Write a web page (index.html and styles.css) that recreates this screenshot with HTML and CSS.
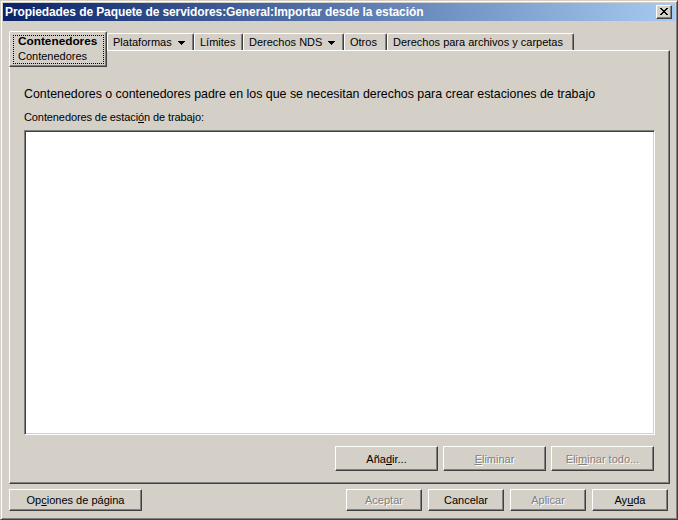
FILE: index.html
```html
<!DOCTYPE html>
<html lang="es">
<head>
<meta charset="utf-8">
<title>Propiedades de Paquete de servidores</title>
<link rel="stylesheet" href="styles.css">
</head>
<body>
<div class="window">
  <div class="titlebar">
    <span class="title">Propiedades de Paquete de servidores:General:Importar desde la estación</span>
    <span class="close-btn">
      <svg width="8" height="7" viewBox="0 0 8 7" shape-rendering="crispEdges">
        <path d="M0 0h2v1h-2zM6 0h2v1h-2zM1 1h2v1h-2zM5 1h2v1h-2zM2 2h4v1h-4zM3 3h2v1h-2zM2 4h4v1h-4zM1 5h2v1h-2zM5 5h2v1h-2zM0 6h2v1h-2zM6 6h2v1h-2z" fill="#000"/>
      </svg>
    </span>
  </div>
  <div class="body">
    <div class="tabs">
      <div class="tab tab-selected">
        <div class="focus-ring">
          <div class="tab-title">Contenedores</div>
          <div class="tab-sub">Contenedores</div>
        </div>
      </div>
      <div class="tab tab-plataformas">Plataformas<svg class="arrow" width="7" height="4" viewBox="0 0 7 4" shape-rendering="crispEdges"><path d="M0 0h7v1h-7zM1 1h5v1h-5zM2 2h3v1h-3zM3 3h1v1h-1z" fill="#000"/></svg></div>
      <div class="tab tab-limites">Límites</div>
      <div class="tab tab-nds">Derechos NDS<svg class="arrow" width="7" height="4" viewBox="0 0 7 4" shape-rendering="crispEdges"><path d="M0 0h7v1h-7zM1 1h5v1h-5zM2 2h3v1h-3zM3 3h1v1h-1z" fill="#000"/></svg></div>
      <div class="tab tab-otros">Otros</div>
      <div class="tab tab-archivos">Derechos para archivos y carpetas</div>
    </div>
    <div class="panel">
      <p class="intro">Contenedores o contenedores padre en los que se necesitan derechos para crear estaciones de trabajo</p>
      <div class="field-label">Contenedores de estaci<u>ó</u>n de trabajo:</div>
      <div class="listbox"></div>
      <div class="panel-buttons">
        <button class="btn btn-panel">Aña<u>d</u>ir...</button>
        <button class="btn btn-panel disabled"><u>E</u>liminar</button>
        <button class="btn btn-panel disabled">Eli<u>m</u>inar todo...</button>
      </div>
    </div>
    <div class="footer">
      <button class="btn btn-options">Op<u>c</u>iones de página</button>
      <div class="spacer"></div>
      <button class="btn btn-footer disabled">Aceptar</button>
      <button class="btn btn-footer">Cancelar</button>
      <button class="btn btn-footer disabled">Aplicar</button>
      <button class="btn btn-footer">Ay<u>u</u>da</button>
    </div>
  </div>
</div>
</body>
</html>
```
FILE: styles.css
```css
* {
  box-sizing: border-box;
}

html, body {
  margin: 0;
  padding: 0;
  background: #d4d0c8;
}

body {
  font-family: "Liberation Sans", Arial, sans-serif;
  font-size: 11px;
  color: #000;
}

.window {
  width: 678px;
  height: 520px;
  display: flex;
  flex-direction: column;
  background: #d4d0c8;
  border: 1px solid;
  border-color: #d4d0c8 #404040 #404040 #d4d0c8;
  box-shadow: inset 1px 1px #ffffff, inset -1px -1px #808080;
  padding: 2px;
}

.titlebar {
  height: 18px;
  flex: none;
  display: flex;
  align-items: center;
  padding-left: 2px;
  padding-right: 3px;
  background: linear-gradient(to right, #0a246a, #a6caf0);
}

.title {
  flex: 1;
  color: #fff;
  font-weight: bold;
  font-size: 12px;
  letter-spacing: -0.1px;
  white-space: nowrap;
}

.close-btn {
  width: 16px;
  height: 14px;
  display: flex;
  align-items: center;
  justify-content: center;
  background: #d4d0c8;
  border: 1px solid;
  border-color: #ffffff #404040 #404040 #ffffff;
  box-shadow: inset -1px -1px #808080;
}

.close-btn svg {
  display: block;
  margin: 0 1px 1px 0;
}

.body {
  flex: 1;
  display: flex;
  flex-direction: column;
  padding: 10px 5px 6px 6px;
  min-height: 0;
}

.tabs {
  height: 19px;
  flex: none;
  display: flex;
  align-items: flex-end;
}

.tab {
  height: 17px;
  display: flex;
  align-items: center;
  padding: 0 8px 0 5px;
  border-top: 1px solid #fff;
  border-left: 1px solid #fff;
  border-right: 1px solid #404040;
  border-radius: 2px 2px 0 0;
  box-shadow: inset -1px 0 #808080;
  white-space: nowrap;
  font-size: 11px;
}

.tab-plataformas { width: 87px; }
.tab-limites { width: 49px; }
.tab-nds { width: 101px; }
.tab-otros { width: 43px; }
.tab-archivos { width: 187px; }

.arrow {
  display: block;
  margin-left: auto;
  margin-top: 1px;
}

.tab-selected {
  position: relative;
  z-index: 1;
  height: 36px;
  width: 98px;
  margin-bottom: -17px;
  padding: 3px 2px 2px 3px;
  background: #d4d0c8;
  border-bottom: 1px solid #404040;
  box-shadow: inset -1px -1px #808080;
  align-items: stretch;
}

.focus-ring {
  flex: 1;
  border: 1px dotted #000;
  padding: 0 0 0 4px;
  display: flex;
  flex-direction: column;
}

.tab-title {
  font-weight: bold;
  font-size: 11.8px;
  line-height: 10px;
  margin-bottom: 3px;
}

.tab-sub {
  font-size: 11px;
  line-height: 14px;
}

.panel {
  flex: 1;
  display: flex;
  flex-direction: column;
  min-height: 0;
  padding: 36px 14px 12px 14px;
  border: 1px solid;
  border-color: #ffffff #404040 #404040 #ffffff;
  box-shadow: inset -1px -1px #808080;
}

.intro {
  margin: 0;
  font-size: 12.4px;
  line-height: 15px;
  white-space: nowrap;
}

.field-label {
  margin-top: 9px;
  font-size: 11px;
  line-height: 13px;
  letter-spacing: -0.1px;
}

.listbox {
  flex: 1;
  margin-top: 6px;
  background: #fff;
  border: 1px solid;
  border-color: #808080 #ffffff #ffffff #808080;
  box-shadow: inset 1px 1px #404040, inset -1px -1px #d4d0c8;
}

.panel-buttons {
  flex: none;
  display: flex;
  justify-content: flex-end;
  gap: 5px;
  margin-top: 11px;
  margin-right: 1px;
}

.btn {
  appearance: none;
  margin: 0;
  padding: 0;
  font-family: "Liberation Sans", Arial, sans-serif;
  font-size: 11px;
  color: #000;
  background: #d4d0c8;
  border: 1px solid;
  border-color: #ffffff #404040 #404040 #ffffff;
  box-shadow: inset -1px -1px #808080;
  text-align: center;
  white-space: nowrap;
}

.btn.disabled {
  color: #808080;
  text-shadow: 1px 1px #ffffff;
}

.btn-panel {
  width: 103px;
  height: 25px;
}

.footer {
  flex: none;
  height: 22px;
  display: flex;
  gap: 6px;
  margin-top: 5px;
  margin-right: 2px;
}

.spacer {
  flex: 1;
}

.btn-options {
  width: 133px;
  height: 22px;
}

.btn-footer {
  width: 76px;
  height: 22px;
}
```
